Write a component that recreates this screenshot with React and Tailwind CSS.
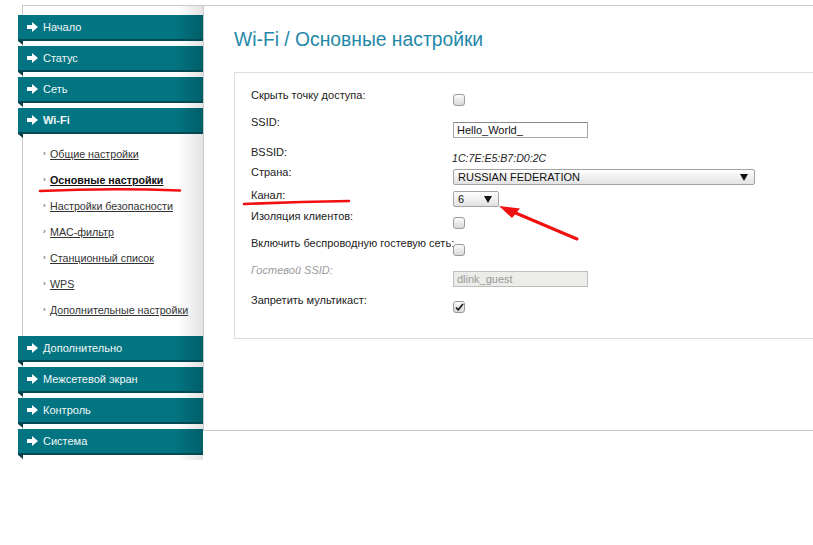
import React from "react";

const topMenu = ["Начало", "Статус", "Сеть"];
const bottomMenu = ["Дополнительно", "Межсетевой экран", "Контроль", "Система"];
const wifiSub = [
  "Общие настройки",
  "Основные настройки",
  "Настройки безопасности",
  "MAC-фильтр",
  "Станционный список",
  "WPS",
  "Дополнительные настройки",
];

function Arrow() {
  return (
    <svg width="11" height="10" viewBox="0 0 11 10" className="shrink-0">
      <path d="M0 3h5V0l6 5-6 5V7H0z" fill="#ffffff" />
    </svg>
  );
}

function MenuBar({ label, active }) {
  return (
    <div className="relative mb-[5px]">
      <div className="flex items-center gap-[5px] h-[26px] -ml-[5px] w-[185px] pl-[9px] border-b-2 border-[#024a53] bg-gradient-to-r from-[#037582] from-85% to-[#005e68] text-[11px] text-[#f2f8f9]">
        <Arrow />
        <span className={active ? "font-bold" : ""}>{label}</span>
      </div>
      <svg width="5" height="4" viewBox="0 0 5 4" className="absolute left-[-5px] top-[26px]">
        <path d="M0 0h5v4z" fill="#0b3b41" />
      </svg>
    </div>
  );
}

function Checkbox({ checked }) {
  return (
    <div className="flex items-center justify-center w-[12px] h-[12px] rounded-[3px] border border-[#9a9a9a] bg-gradient-to-b from-[#fbfbfb] to-[#d9d9d9]">
      {checked && (
        <svg width="9" height="8" viewBox="0 0 9 8">
          <path d="M1 4.5l2.2 2.3L8 1" stroke="#222" strokeWidth="1.8" fill="none" />
        </svg>
      )}
    </div>
  );
}

function Select({ value, width }) {
  return (
    <div
      className={`flex items-center justify-between h-[16px] ${width} pl-[4px] pr-[6px] border border-[#a3a3a3] rounded-[2px] bg-gradient-to-b from-white to-[#e2e2e2] text-[11px] text-[#111]`}
    >
      <span>{value}</span>
      <svg width="8" height="7" viewBox="0 0 8 7">
        <path d="M0 0h8L4 7z" fill="#111" />
      </svg>
    </div>
  );
}

function Row({ label, h, off, italic, children }) {
  return (
    <div className={`flex ${h}`}>
      <div
        className={`w-[202px] shrink-0 whitespace-nowrap text-[11px] leading-[14px] ${
          italic ? "italic text-[#9a9a9a]" : "text-[#222]"
        }`}
      >
        {label}
      </div>
      <div className={off}>{children}</div>
    </div>
  );
}

export default function App() {
  return (
    <div className="relative w-[813px] h-[545px] overflow-hidden bg-white font-['Liberation_Sans',Arial,sans-serif]">
      <div className="flex pt-[5px] pl-[22px]">
        <aside className="w-[181px] shrink-0 border-l border-t border-[#c9c9c9] pt-[9px] bg-gradient-to-r from-white from-[86%] to-[#e3e3e3]">
          {topMenu.map((m) => (
            <MenuBar key={m} label={m} />
          ))}
          <MenuBar label="Wi-Fi" active />
          <div className="-mt-[5px] pt-[7px] pb-[13px]">
            {wifiSub.map((s, i) => (
              <div key={s} className="flex items-center h-[26px] pl-[20px] text-[10.7px]">
                <span className="w-[7px] text-[8px] text-[#444]">›</span>
                <span className={`underline ${i === 1 ? "font-bold text-[#111]" : "text-[#333]"}`}>{s}</span>
              </div>
            ))}
          </div>
          {bottomMenu.map((m) => (
            <MenuBar key={m} label={m} />
          ))}
        </aside>

        <main className="flex-1 h-[426px] border-t border-l border-b border-[#c9c9c9] pl-[30px] pt-[22px]">
          <h1 className="text-[19.3px] leading-[24px] text-[#2388a8]">Wi-Fi / Основные настройки</h1>
          <div className="mt-[20px] w-[700px] border border-[#dcdcdc] pl-[16px] pt-[15px] pb-[25px]">
            <Row label="Скрыть точку доступа:" h="h-[27px]" off="pt-[6px]">
              <Checkbox />
            </Row>
            <Row label="SSID:" h="h-[30px]" off="pt-[7px]">
              <div className="flex items-center w-[135px] h-[16px] pl-[3px] border border-[#a8a8a8] border-t-[#8a8a8a] text-[11px] text-[#111]">
                Hello_World_
              </div>
            </Row>
            <Row label="BSSID:" h="h-[20px]" off="pt-0">
              <span className="-ml-[1px] text-[10.6px] leading-[14px] italic text-[#222]">1C:7E:E5:B7:D0:2C</span>
            </Row>
            <Row label="Страна:" h="h-[23px]" off="pt-[4px]">
              <Select value="RUSSIAN FEDERATION" width="w-[302px]" />
            </Row>
            <Row label="Канал:" h="h-[21px]" off="pt-[3px]">
              <Select value="6" width="w-[46px]" />
            </Row>
            <Row label="Изоляция клиентов:" h="h-[27px]" off="pt-[8px]">
              <Checkbox />
            </Row>
            <Row label="Включить беспроводную гостевую сеть:" h="h-[27px]" off="pt-[8px]">
              <Checkbox />
            </Row>
            <Row label="Гостевой SSID:" h="h-[30px]" off="pt-[8px]" italic>
              <div className="flex items-center w-[135px] h-[16px] pl-[3px] border border-[#bdbdbd] bg-[#ecece9] text-[11px] text-[#9a9a9a]">
                dlink_guest
              </div>
            </Row>
            <Row label="Запретить мультикаст:" h="h-[20px]" off="pt-[8px]">
              <Checkbox checked />
            </Row>
          </div>
        </main>
      </div>

      <svg className="absolute inset-0 pointer-events-none" width="813" height="545" viewBox="0 0 813 545">
        <path d="M40 191 Q110 188 180 190.5" stroke="#f01010" strokeWidth="2.5" fill="none" strokeLinecap="round" />
        <path d="M244 204 Q296 202 349 201" stroke="#f01010" strokeWidth="2.5" fill="none" strokeLinecap="round" />
        <path d="M577 239 L511 211" stroke="#f01010" strokeWidth="3" fill="none" strokeLinecap="round" />
        <path d="M499 206 L520 208.5 L512 218 Z" fill="#f01010" />
      </svg>
    </div>
  );
}
